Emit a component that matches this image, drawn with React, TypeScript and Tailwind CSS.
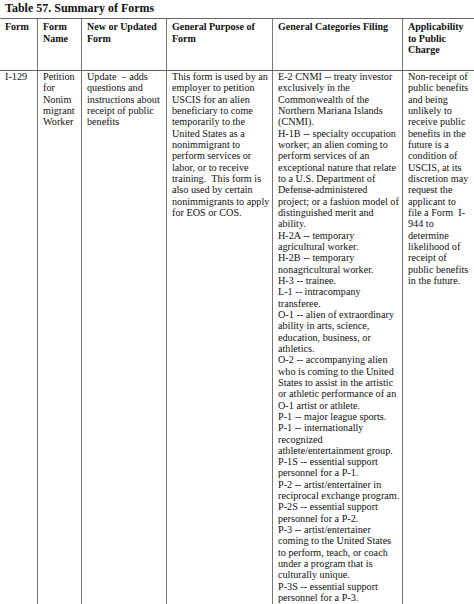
const headers: string[][] = [
  ['Form'],
  ['Form', 'Name'],
  ['New or Updated', 'Form'],
  ['General Purpose of', 'Form'],
  ['General Categories Filing'],
  ['Applicability', 'to Public', 'Charge'],
]

const body: string[][] = [
  ['I-129'],
  ['Petition', 'for', 'Nonim', 'migrant', 'Worker'],
  ['Update \u00a0– adds', 'questions and', 'instructions about', 'receipt of public', 'benefits'],
  [
    'This form is used by an',
    'employer to petition',
    'USCIS for an alien',
    'beneficiary to come',
    'temporarily to the',
    'United States as a',
    'nonimmigrant to',
    'perform services or',
    'labor, or to receive',
    'training. \u00a0This form is',
    'also used by certain',
    'nonimmigrants to apply',
    'for EOS or COS.',
  ],
  [
    'E-2 CNMI -- treaty investor',
    'exclusively in the',
    'Commonwealth of the',
    'Northern Mariana Islands',
    '(CNMI).',
    'H-1B -- specialty occupation',
    'worker; an alien coming to',
    'perform services of an',
    'exceptional nature that relate',
    'to a U.S. Department of',
    'Defense-administered',
    'project; or a fashion model of',
    'distinguished merit and',
    'ability.',
    'H-2A -- temporary',
    'agricultural worker.',
    'H-2B -- temporary',
    'nonagricultural worker.',
    'H-3 -- trainee.',
    'L-1 -- intracompany',
    'transferee.',
    'O-1 -- alien of extraordinary',
    'ability in arts, science,',
    'education, business, or',
    'athletics.',
    'O-2 -- accompanying alien',
    'who is coming to the United',
    'States to assist in the artistic',
    'or athletic performance of an',
    'O-1 artist or athlete.',
    'P-1 -- major league sports.',
    'P-1 -- internationally',
    'recognized',
    'athlete/entertainment group.',
    'P-1S -- essential support',
    'personnel for a P-1.',
    'P-2 -- artist/entertainer in',
    'reciprocal exchange program.',
    'P-2S -- essential support',
    'personnel for a P-2.',
    'P-3 -- artist/entertainer',
    'coming to the United States',
    'to perform, teach, or coach',
    'under a program that is',
    'culturally unique.',
    'P-3S -- essential support',
    'personnel for a P-3.',
  ],
  [
    'Non-receipt of',
    'public benefits',
    'and being',
    'unlikely to',
    'receive public',
    'benefits in the',
    'future is a',
    'condition of',
    'USCIS, at its',
    'discretion may',
    'request the',
    'applicant to',
    'file a Form \u00a0I-',
    '944 to',
    'determine',
    'likelihood of',
    'receipt of',
    'public benefits',
    'in the future.',
  ],
]

const cols = 'grid grid-cols-[38px_44px_85px_106px_130px_1fr]'

function Lines({ lines }: { lines: string[] }) {
  return (
    <>
      {lines.map((line, i) => (
        <div key={i} className="whitespace-pre">
          {line}
        </div>
      ))}
    </>
  )
}

export default function App() {
  return (
    <div className="h-[604px] w-[474px] overflow-hidden bg-white text-[#111] [font-family:'Liberation_Serif',serif]">
      <div className="h-[18px] pl-[5px] pt-px text-[12px] font-bold leading-[14px]">
        Table 57. Summary of Forms
      </div>
      <div className="w-[490px] border-t border-[#666]">
        <div className={`${cols} h-[52px] border-b border-[#666] text-[10px] font-bold leading-[11.7px]`}>
          {headers.map((h, i) => (
            <div key={i} className="border-r border-[#777] pl-[5px] pt-[2px]">
              <Lines lines={h} />
            </div>
          ))}
        </div>
        <div className={`${cols} h-[560px] text-[10.2px] leading-[11.33px]`}>
          {body.map((c, i) => (
            <div key={i} className="border-r border-[#777] pl-[5px]">
              <Lines lines={c} />
            </div>
          ))}
        </div>
      </div>
    </div>
  )
}
